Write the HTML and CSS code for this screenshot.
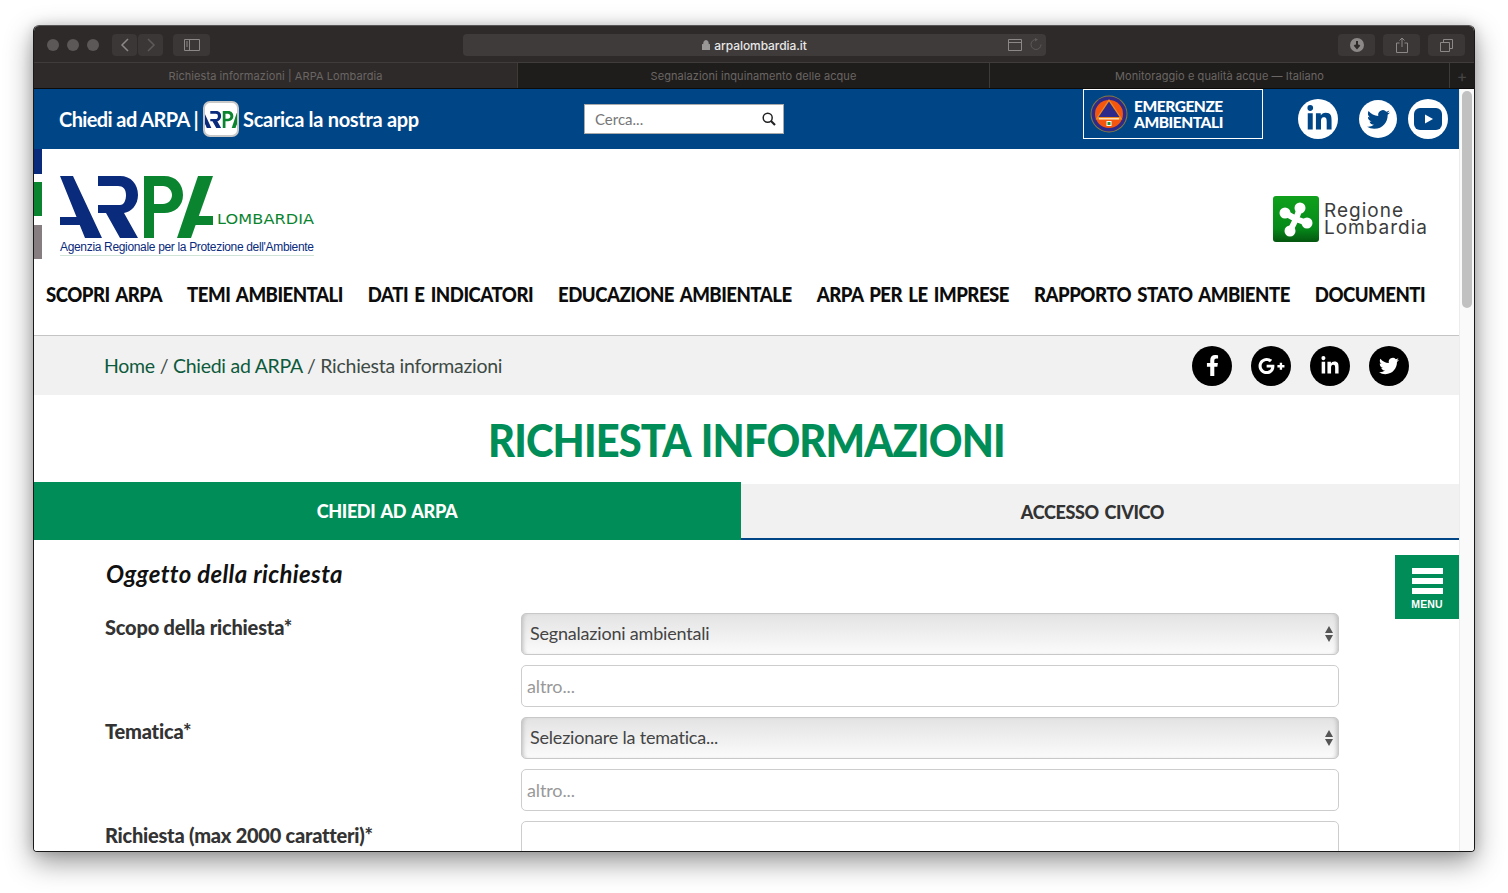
FILE: index.html
```html
<!DOCTYPE html>
<html lang="it">
<head>
<meta charset="utf-8">
<title>Richiesta informazioni | ARPA Lombardia</title>
<link rel="stylesheet" href="styles.css">
</head>
<body>
<svg class="defs" width="0" height="0" aria-hidden="true">
  <defs>
    <symbol id="arpa" viewBox="0 0 155 62">
      <path fill="#0a2a7c" d="M0 0H13L42 62H25ZM0 41H26L30 49H0Z"/>
      <path fill="#0a2a7c" d="M38 0H60C71 0 78 8 78 19C78 29 71 36 64 37L78 62H60L46 37H38V29H60C64 29 66 24 66 19C66 13 63 10 58 10H38Z"/>
      <path fill="#0a842f" fill-rule="evenodd" d="M84 0H104C116 0 123 8 123 19C123 30 115 37 104 37H94V62H84ZM94 10V28H103C108 28 112 24 112 19C112 14 108 10 103 10Z"/>
      <path fill="#0a842f" d="M138 0H153L131 62H117Z"/>
      <path fill="#0a842f" d="M136 40H153V49H133Z"/>
    </symbol>
    <symbol id="i-tw" viewBox="0 0 24 24"><path d="M23.953 4.57a10 10 0 01-2.825.775 4.958 4.958 0 002.163-2.723c-.951.555-2.005.959-3.127 1.184a4.92 4.92 0 00-8.384 4.482C7.69 8.095 4.067 6.13 1.64 3.162a4.822 4.822 0 00-.666 2.475c0 1.71.87 3.213 2.188 4.096a4.904 4.904 0 01-2.228-.616v.06a4.923 4.923 0 003.946 4.827 4.996 4.996 0 01-2.212.085 4.936 4.936 0 004.604 3.417 9.867 9.867 0 01-6.102 2.105c-.39 0-.779-.023-1.17-.067a13.995 13.995 0 007.557 2.209c9.053 0 13.998-7.496 13.998-13.985 0-.21 0-.42-.015-.63A9.935 9.935 0 0024 4.59z"/></symbol>
    <symbol id="i-in" viewBox="0 0 448 512"><path d="M100.28 448H7.4V148.9h92.88zM53.79 108.1C24.09 108.1 0 83.5 0 53.8a53.79 53.79 0 0 1 107.58 0c0 29.7-24.1 54.3-53.79 54.3zM447.9 448h-92.68V302.4c0-34.7-.7-79.2-48.29-79.2-48.29 0-55.69 37.7-55.69 76.7V448h-92.78V148.9h89.08v40.8h1.3c12.4-23.5 42.69-48.3 87.88-48.3 94 0 111.28 61.9 111.28 142.3V448z"/></symbol>
  </defs>
</svg>
<div class="window">
  <div class="toolbar">
    <div class="lights"><span></span><span></span><span></span></div>
    <div class="navbtns">
      <span class="tbtn tbtn-nav"><svg width="10" height="14" viewBox="0 0 10 14"><path d="M8 1 2 7l6 6" class="st-on"/></svg></span>
      <span class="tbtn tbtn-nav"><svg width="10" height="14" viewBox="0 0 10 14"><path d="m2 1 6 6-6 6" class="st-off"/></svg></span>
    </div>
    <span class="tbtn tbtn-side"><svg width="16" height="12" viewBox="0 0 16 12"><path d="M.5.5h15v11H.5zM5.5.5v11M2 3h2M2 5h2M2 7h2" class="st-on thin"/></svg></span>
    <div class="urlbar">
      <span class="url"><svg width="8" height="10" viewBox="0 0 9 11"><path d="M0 5h9v6H0zM2 5V3a2.500 2.500 0 0 1 5 0v2" class="lock"/></svg>arpalombardia.it</span>
      <span class="url-icons">
        <svg width="14" height="12" viewBox="0 0 14 12"><path d="M.5.500h13v11H.5zM.5 3.500h13" class="st-on thin"/></svg>
        <svg width="13" height="13" viewBox="0 0 13 13"><path d="M7.500 1.500a5 5 0 1 0 4.500 5" class="st-off thin"/><path d="m6 0 3 1.500L6 3.500z" class="fill-off"/></svg>
      </span>
    </div>
    <div class="tools">
      <span class="tbtn tbtn-tool"><svg width="14" height="14" viewBox="0 0 14 14"><circle cx="7" cy="7" r="7" class="fill-on"/><path d="M7 3v6M4.500 7 7 10l2.500-3" class="st-dark"/></svg></span>
      <span class="tbtn tbtn-tool"><svg width="12" height="16" viewBox="0 0 12 16"><path d="M3.500 6H.5v9.500h11V6H8.500M6 10V1M3.500 3.500 6 1l2.500 2.500" class="st-on thin"/></svg></span>
      <span class="tbtn tbtn-tool"><svg width="13" height="13" viewBox="0 0 13 13"><path d="M.5 3.500h9v9h-9zM3.500 3.500v-3h9v9h-3" class="st-on thin"/></svg></span>
    </div>
  </div>
  <div class="tabs">
    <div class="tab tab-active">Richiesta informazioni | ARPA Lombardia</div>
    <div class="tab tab-2">Segnalazioni inquinamento delle acque</div>
    <div class="tab tab-3">Monitoraggio e qualità acque — Italiano</div>
    <div class="tab-plus">+</div>
  </div>
  <div class="viewport">
    <main class="page">
      <header class="topbar">
        <div class="top-left">
          <span class="tl-a">Chiedi ad ARPA |</span>
          <span class="appicon"><svg width="42" height="17" viewBox="0 0 155 62"><use href="#arpa"/></svg></span>
          <span>Scarica la nostra app</span>
        </div>
        <div class="search"><span class="search-ph">Cerca...</span><svg width="14" height="14" viewBox="0 0 14 14"><circle cx="5.700" cy="5.700" r="4.500" class="st-black"/><path d="m9 9 4 4" class="st-black wide"/></svg></div>
        <div class="emerg">
          <svg width="38" height="38" viewBox="0 0 38 38">
            <circle cx="19" cy="19" r="18.500" fill="#8a7c3a"/>
            <circle cx="19" cy="19" r="17.500" fill="#2d2a8a"/>
            <circle cx="19" cy="19" r="14" fill="#f4560f"/>
            <path d="M19 4 32.500 24.500H5.500z" fill="#f08a1e"/>
            <path d="M19 6.500 29.500 22H8.500z" fill="#2d2a8a"/>
            <path d="M9 23H29V24.500H9z" fill="#ffd9b0"/>
            <rect x="16.500" y="26" width="5" height="5" fill="#fff"/>
            <rect x="17.500" y="27" width="3" height="3" fill="#1a9a3a"/>
          </svg>
          <span class="emerg-text">EMERGENZE<br>AMBIENTALI</span>
        </div>
        <div class="top-social">
          <span class="round round-w round-in"><svg width="25" height="28" viewBox="0 0 448 512"><use href="#i-in"/></svg></span>
          <span class="round round-w round-tw"><svg width="23" height="23" viewBox="0 0 24 24"><use href="#i-tw"/></svg></span>
          <span class="round round-w round-yt"><svg width="28" height="22" viewBox="0 0 28 22"><rect width="28" height="22" rx="6" fill="#004586"/><path d="m11 6.500 8 4.500-8 4.500z" fill="#fff"/></svg></span>
        </div>
      </header>

      <section class="brand">
        <div class="stripes"><i class="s-navy"></i><i class="s-green"></i><i class="s-grey"></i></div>
        <div class="logo">
          <svg class="logo-mark" width="155" height="62" viewBox="0 0 155 62"><use href="#arpa"/></svg>
          <span class="logo-lomb">LOMBARDIA</span>
          <span class="logo-sub">Agenzia Regionale per la Protezione dell'Ambiente</span>
        </div>
        <div class="regione">
          <svg width="46" height="46" viewBox="0 0 46 46">
            <defs><linearGradient id="rg" x1="0" y1="0" x2="0" y2="1"><stop offset="0" stop-color="#0fa01c"/><stop offset=".7" stop-color="#068a1a"/><stop offset="1" stop-color="#04560f"/></linearGradient></defs>
            <rect width="46" height="46" rx="3" fill="url(#rg)"/>
            <path d="M23 23 27 12M23 23 12 17M23 23 17 35M23 23 34 27" stroke="#fff" stroke-width="6" stroke-linecap="round" fill="none"/>
            <g fill="#fff"><circle cx="27" cy="12" r="5.500"/><circle cx="12" cy="17" r="5.500"/><circle cx="17" cy="35" r="5.500"/><circle cx="34" cy="27" r="5.500"/></g>
          </svg>
          <span class="regione-text">Regione<br>Lombardia</span>
        </div>
      </section>

      <nav class="mainnav">
        <div class="nav-inner"><a>SCOPRI ARPA</a><a>TEMI AMBIENTALI</a><a>DATI E INDICATORI</a><a>EDUCAZIONE AMBIENTALE</a><a>ARPA PER LE IMPRESE</a><a>RAPPORTO STATO AMBIENTE</a><a>DOCUMENTI</a></div>
      </nav>

      <div class="crumbs">
        <div class="crumb-text"><a>Home</a> / <a>Chiedi ad ARPA</a> / Richiesta informazioni</div>
        <div class="share">
          <span class="round round-b"><svg width="13" height="21" viewBox="0 0 320 512"><path d="M279.14 288l14.22-92.66h-88.91v-60.13c0-25.35 12.42-50.06 52.24-50.06h40.42V6.26S260.43 0 225.360 0c-73.220 0-121.080 44.380-121.080 124.720v70.620H22.890V288h81.390v224h100.170V288z"/></svg></span>
          <span class="round round-b"><svg width="27" height="22" viewBox="0 0 640 512"><path d="M386.061 228.496c1.834 9.692 3.143 19.384 3.143 31.956C389.204 370.205 315.599 448 204.800 448c-106.084 0-192-85.915-192-192s85.916-192 192-192c51.864 0 95.083 18.859 128.611 50.292l-52.126 50.030c-14.145-13.621-39.028-29.599-76.485-29.599-65.484 0-118.920 54.221-118.920 121.277 0 67.056 53.436 121.277 118.920 121.277 75.961 0 104.513-54.745 108.965-82.773H204.800v-66.009h181.261zm185.406 6.437V179.200h-56.001v55.733h-55.733v56.001h55.733v55.733h56.001v-55.733H627.200v-56.001h-55.733z"/></svg></span>
          <span class="round round-b"><svg width="18" height="20" viewBox="0 0 448 512"><use href="#i-in"/></svg></span>
          <span class="round round-b"><svg width="20" height="20" viewBox="0 0 24 24"><use href="#i-tw"/></svg></span>
        </div>
      </div>

      <h1 class="title"><span class="title-text">RICHIESTA INFORMAZIONI</span></h1>

      <div class="ptabs">
        <a class="ptab ptab-on"><span class="ptab-text">CHIEDI AD ARPA</span></a>
        <a class="ptab ptab-off"><span class="ptab-text">ACCESSO CIVICO</span></a>
      </div>

      <h2 class="section">Oggetto della richiesta</h2>

      <form class="form">
        <label class="flabel">Scopo della richiesta*</label>
        <div class="selwrap"><select class="fsel"><option>Segnalazioni ambientali</option></select><svg class="selarrow" width="8" height="16" viewBox="0 0 8 16"><path d="M4 0 8 7H0zM0 9h8l-4 7z"/></svg></div>
        <span></span>
        <input class="finput" placeholder="altro...">
        <label class="flabel">Tematica*</label>
        <div class="selwrap"><select class="fsel"><option>Selezionare la tematica...</option></select><svg class="selarrow" width="8" height="16" viewBox="0 0 8 16"><path d="M4 0 8 7H0zM0 9h8l-4 7z"/></svg></div>
        <span></span>
        <input class="finput" placeholder="altro...">
        <label class="flabel flabel-3">Richiesta (max 2000 caratteri)*</label>
        <textarea class="farea"></textarea>
      </form>

      <a class="menubtn"><span class="bars"><i></i><i></i><i></i></span><span class="menutxt">MENU</span></a>
    </main>
    <aside class="scrollbar"><span class="thumb"></span></aside>
  </div>
</div>
</body>
</html>
```
FILE: styles.css
```css
* { box-sizing: border-box; }
html, body { margin: 0; height: 100%; background: #fff; overflow: hidden; }
body { padding: 25px 33px 41px; font-family: "Lato", "Liberation Sans", sans-serif; }
.defs { display: block; height: 0; }
.window {
  height: 827px; display: flex; flex-direction: column; overflow: hidden;
  border: 1px solid #1a1818; border-top-color: #555; border-radius: 6px 6px 4px 4px;
  box-shadow: 0 10px 28px rgba(0,0,0,.42), 0 0 12px rgba(0,0,0,.14);
}
.toolbar { height: 37px; flex: none; background: #2e2a29; display: flex; align-items: center; padding: 2px 0 0 13px; border-bottom: 1px solid #403c3b; }
.lights { display: flex; gap: 8px; width: 65px; }
.lights span { width: 12px; height: 12px; border-radius: 50%; background: #5b5857; }
.navbtns { display: flex; gap: 1px; }
.tbtn { display: inline-flex; align-items: center; justify-content: center; height: 22px; background: #3b3736; border-radius: 4px; }
.tbtn-nav { width: 25px; }
.tbtn-side { width: 37px; margin-left: 10px; }
.tbtn-tool { width: 37px; }
.urlbar { width: 583px; height: 22px; margin-left: 253px; background: #3f3b3a; border-radius: 4px; position: relative; display: flex; align-items: center; justify-content: center; color: #e8e8e8; font: 500 12px "Inter", sans-serif; letter-spacing: -.08px; }
.url { display: inline-flex; align-items: center; gap: 4px; }
.url-icons { position: absolute; right: 4px; top: 4px; display: flex; gap: 7px; align-items: center; }
.tools { margin-left: auto; display: flex; gap: 8px; padding-right: 9px; }
.st-on { fill: none; stroke: #8b8887; stroke-width: 1.500; }
.st-on.thin { stroke-width: 1; }
.st-off { fill: none; stroke: #5d5a59; stroke-width: 1.500; }
.st-off.thin { stroke-width: 1; }
.fill-off { fill: #5d5a59; }
.fill-on { fill: #8b8887; }
.st-dark { fill: none; stroke: #2e2a29; stroke-width: 2; }
.lock { fill: #9a9897; stroke: #9a9897; stroke-width: 1; }
.tabs { height: 26px; flex: none; display: flex; background: #1f1d1b; border-bottom: 1px solid #0c0b0a; color: #6a6664; font: 400 11px "Inter", sans-serif; letter-spacing: .08px; }
.tab { display: flex; align-items: center; justify-content: center; border-right: 1px solid #3d3a38; }
.tab-active { width: 484px; background: #2e2a29; }
.tab-2 { width: 472px; }
.tab-3 { width: 460px; }
.tab-plus { flex: 1; display: flex; align-items: center; justify-content: center; font-size: 16px; color: #444; }
.viewport { flex: 1; display: flex; min-height: 0; }
.page { flex: 1; min-width: 0; position: relative; overflow: hidden; background: #fff; color: #222; }
.scrollbar { width: 15px; flex: none; background: #fafafa; border-left: 1px solid #ececec; padding: 2px 2px 0; }
.thumb { display: block; width: 10px; height: 217px; background: #c1c1c1; border-radius: 5px; }

.topbar { height: 60px; background: #004586; color: #fff; display: flex; align-items: center; position: relative; padding-left: 25px; }
.top-left { display: flex; align-items: center; gap: 4px; font-size: 20px; font-weight: 700; width: 525px; flex: none; letter-spacing: -.3px; white-space: nowrap; }
.tl-a { letter-spacing: -.6px; margin-right: 1px; }
.appicon { width: 36px; height: 36px; background: #fff; border: 2px solid #c8c8c8; border-radius: 7px; overflow: hidden; display: flex; align-items: center; justify-content: center; flex: none; }
.appicon svg { flex: none; }
.search { width: 200px; height: 30px; flex: none; background: #fff; border: 1px solid #aaa; display: flex; align-items: center; justify-content: space-between; padding: 0 7px 0 10px; }
.search-ph { color: #777; font-size: 15px; }
.st-black { fill: none; stroke: #222; stroke-width: 1.500; }
.st-black.wide { stroke-width: 2.200; }
.emerg { width: 180px; height: 50px; margin-left: 299px; flex: none; border: 1px solid #fff; display: flex; align-items: center; gap: 6px; padding-left: 6px; margin-top: -10px; }
.emerg-text { font-size: 15.500px; line-height: 16px; font-weight: 900; letter-spacing: -.45px; }
.top-social { display: flex; margin-left: 35px; flex: none; }
.round { display: inline-flex; align-items: center; justify-content: center; border-radius: 50%; flex: none; }
.round-w { width: 40px; height: 40px; background: #fff; fill: #004586; }
.round-tw { margin-left: 21px; width: 38px; height: 38px; margin-top: 1px; }
.round-yt { margin-left: 11px; }
.round-in svg { margin-top: -1px; margin-left: 2px; }

.brand { height: 110px; display: flex; position: relative; }
.stripes { width: 8px; display: flex; flex-direction: column; flex: none; }
.stripes i { display: block; }
.s-navy { height: 25px; background: #0a2a7c; }
.s-green { height: 34px; margin-top: 8px; background: #0a842f; }
.s-grey { height: 34px; margin-top: 9px; background: #857d7f; }
.logo { position: relative; margin: 27px 0 0 18px; width: 254px; height: 78px; }
.logo-mark { display: block; }
.logo-lomb { position: absolute; left: 157px; top: 35px; color: #0a842f; font: 400 13.500px "DejaVu Sans", sans-serif; letter-spacing: .1px; transform: scaleX(1.19); transform-origin: left center; }
.logo-sub { position: absolute; left: 0; top: 63px; width: 254px; height: 17px; color: #0a2a7c; font: 400 12px/16px "Liberation Sans", sans-serif; letter-spacing: -.33px; white-space: nowrap; border-bottom: 1px solid #cfe3d6; }
.regione { margin-left: auto; margin-top: 47px; margin-right: 31px; display: flex; gap: 5px; align-items: flex-start; }
.regione-text { font: 400 19px/17px "Inter", sans-serif; color: #3c3c3c; letter-spacing: 1px; padding-top: 6px; }

.mainnav { height: 77px; padding: 0 0 6px 12px; display: flex; align-items: center; border-bottom: 1px solid #c4c4c4; color: #0c0c0c; font-size: 20px; font-weight: 900; white-space: nowrap; letter-spacing: -.55px; word-spacing: 2.500px; }
.nav-inner { width: 1483px; flex: none; display: flex; justify-content: space-between; transform: scaleX(.93); transform-origin: left center; }
.crumbs { height: 59px; background: #f1f1f1; display: flex; align-items: center; justify-content: space-between; padding: 0 50px 0 70px; font-size: 19.500px; color: #3e4a45; letter-spacing: -.27px; }
.crumb-text a { color: #0d5a3c; }
.share { display: flex; gap: 19px; }
.round-b { width: 40px; height: 40px; background: #000; fill: #fff; }

.title { margin: 0; height: 87px; display: flex; align-items: center; justify-content: center; color: #008d57; font-size: 46px; font-weight: 900; letter-spacing: -.95px; word-spacing: 3px; padding-top: 2px; }
.title-text { display: inline-block; transform: scaleX(.905); white-space: nowrap; }
.ptabs { display: flex; height: 58px; font-size: 19.500px; font-weight: 900; letter-spacing: -.4px; word-spacing: 2px; }
.ptab { display: flex; align-items: center; justify-content: center; padding-bottom: 2px; }
.ptab-text { display: inline-block; transform: scaleX(.925); }
.ptab-on { width: 707px; background: #008d57; color: #fff; padding-right: 2px; }
.ptab-off { flex: 1; margin-top: 2px; background: #f1f1f1; color: #333; border-bottom: 2px solid #004586; padding: 0 16px 0 0; }
.section { margin: 0; height: 73px; padding: 18px 0 0 72px; font-size: 24px; font-style: italic; font-weight: 700; color: #111; line-height: 32px; letter-spacing: .35px; }
.form { display: grid; grid-template-columns: 416px 818px; row-gap: 10px; padding-left: 71px; }
.flabel { font-size: 20px; font-weight: 900; color: #333; padding-top: 2px; line-height: 24px; letter-spacing: -.2px; }
.flabel-3 { letter-spacing: -.25px; }
.selwrap { position: relative; height: 42px; }
.fsel { appearance: none; width: 100%; height: 42px; border: 1px solid #c8c8c8; border-radius: 5px; padding: 0 8px 3px; font: 400 18px "Lato", sans-serif; color: #444; letter-spacing: -.2px; background: linear-gradient(#e3e3e3, #efefef 50%, #fbfbfb); box-shadow: inset 4px 0 4px -3px #bbb, inset -4px 0 4px -3px #bbb; }
.selarrow { position: absolute; right: 6px; top: 13px; fill: #555; }
.finput, .farea { width: 100%; height: 42px; border: 1px solid #cdcdcd; border-radius: 5px; padding: 0 5px 1px; font: 400 18px "Lato", sans-serif; background: #fff; letter-spacing: -.12px; }
.finput::placeholder { color: #999; }
.farea { height: 100px; resize: none; display: block; }
.menubtn { position: absolute; right: 0; top: 466px; width: 64px; height: 64px; background: #008d57; color: #fff; display: flex; flex-direction: column; align-items: center; padding-top: 13px; }
.bars { display: flex; flex-direction: column; gap: 4px; }
.bars i { display: block; width: 31px; height: 6px; background: #fff; }
.menutxt { font: 700 10.500px "Liberation Sans", sans-serif; margin-top: 4px; letter-spacing: .1px; }
```
